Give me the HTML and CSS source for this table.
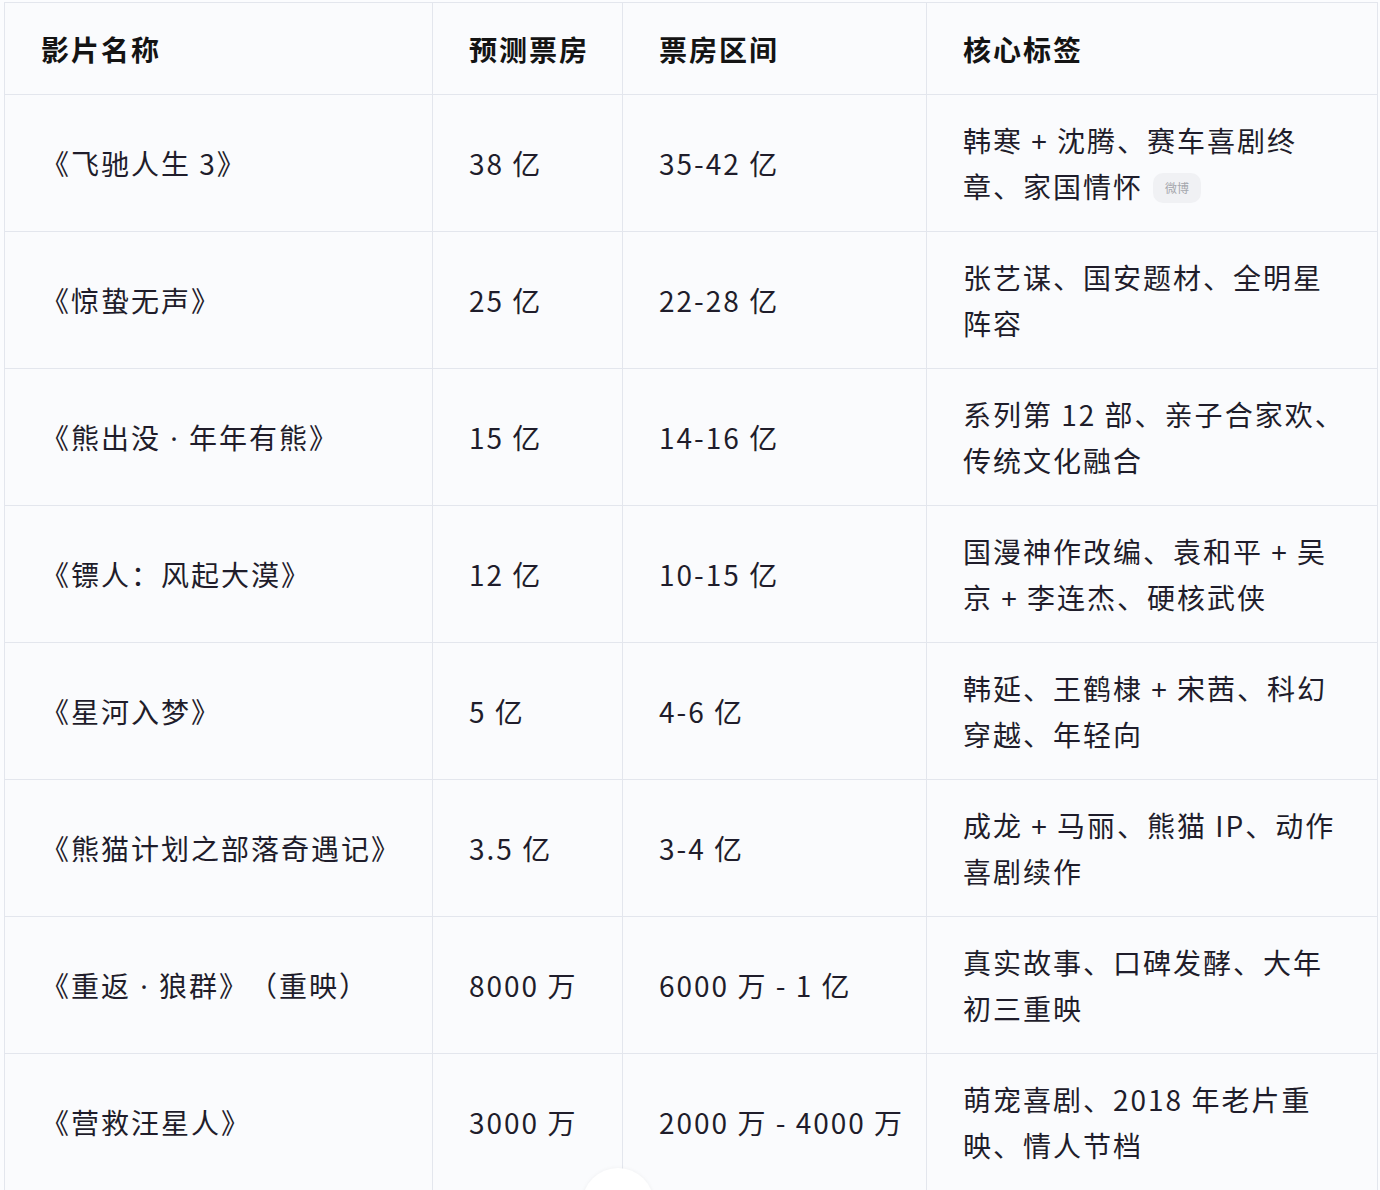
FILE: index.html
```html
<!DOCTYPE html>
<html lang="zh-CN">
<head>
<meta charset="utf-8">
<title>春节档票房预测</title>
<link rel="stylesheet" href="styles.css">
</head>
<body>
<div class="wrap">
<table class="box">
  <colgroup>
    <col class="c1"><col class="c2"><col class="c3"><col class="c4">
  </colgroup>
  <thead>
    <tr><th>影片名称</th><th>预测票房</th><th>票房区间</th><th>核心标签</th></tr>
  </thead>
  <tbody>
    <tr><td>《飞驰人生 3》</td><td>38 亿</td><td>35-42 亿</td><td class="tags"><span>韩寒 + 沈腾、赛车喜剧终</span><span>章、家国情怀</span><span class="badge">微博</span></td></tr>
    <tr><td>《惊蛰无声》</td><td>25 亿</td><td>22-28 亿</td><td class="tags">张艺谋、国安题材、全明星阵容</td></tr>
    <tr><td>《熊出没<span class="dot"> · </span>年年有熊》</td><td>15 亿</td><td>14-16 亿</td><td class="tags">系列第 12 部、亲子合家欢、传统文化融合</td></tr>
    <tr><td>《镖人：风起大漠》</td><td>12 亿</td><td>10-15 亿</td><td class="tags">国漫神作改编、袁和平 + 吴京 + 李连杰、硬核武侠</td></tr>
    <tr><td>《星河入梦》</td><td>5 亿</td><td>4-6 亿</td><td class="tags">韩延、王鹤棣 + 宋茜、科幻穿越、年轻向</td></tr>
    <tr><td>《熊猫计划之部落奇遇记》</td><td>3.5 亿</td><td>3-4 亿</td><td class="tags">成龙 + 马丽、熊猫 IP、动作喜剧续作</td></tr>
    <tr><td>《重返<span class="dot"> · </span>狼群》（重映）</td><td>8000 万</td><td>6000 万 - 1 亿</td><td class="tags">真实故事、口碑发酵、大年初三重映</td></tr>
    <tr><td>《营救汪星人》</td><td>3000 万</td><td>2000 万 - 4000 万</td><td class="tags">萌宠喜剧、2018 年老片重映、情人节档</td></tr>
  </tbody>
</table>
<div class="fab"></div>
</div>
</body>
</html>
```
FILE: styles.css
```css
html, body {
  margin: 0;
  padding: 0;
  background: #fbfcfe;
  overflow: hidden;
}
body {
  font-family: "Noto Sans CJK SC", "Noto Sans", sans-serif;
  color: #1f1d2b;
}
.wrap {
  position: relative;
  padding: 2px 0 0 4px;
  height: 1188px;
}
.box {
  border-collapse: collapse;
  table-layout: fixed;
  width: 1373px;
  background: #fafbfd;
  text-spacing-trim: space-all;
}
.c1 { width: 428px; }
.c2 { width: 190px; }
.c3 { width: 304px; }
.c4 { width: 451px; }
.box th, .box td {
  border: 1px solid #e3e6ed;
  text-align: left;
  vertical-align: middle;
  font-size: 28px;
  line-height: 46px;
  letter-spacing: 2px;
  padding: 0 6px 0 36px;
  white-space: nowrap;
}
.box td.tags {
  white-space: normal;
  padding-right: 30px;
}
.box th {
  height: 91px;
  font-weight: 700;
  color: #141414;
}
.box td {
  height: 136px;
  font-weight: 400;
}
.dot {
  font-family: "Noto Sans", sans-serif;
  white-space: pre;
}
.badge {
  display: inline-block;
  vertical-align: middle;
  margin-left: 10px;
  padding: 0 12px;
  height: 30px;
  line-height: 30px;
  border-radius: 10px;
  background: #f0f1f4;
  color: #a5a7ad;
  font-size: 12px;
  letter-spacing: 0;
  position: relative;
  top: -2px;
}
.fab {
  position: absolute;
  left: 582px;
  top: 1168px;
  width: 72px;
  height: 72px;
  border-radius: 50%;
  background: #ffffff;
  box-shadow: 0 0 4px rgba(0,0,0,0.05);
}
```
